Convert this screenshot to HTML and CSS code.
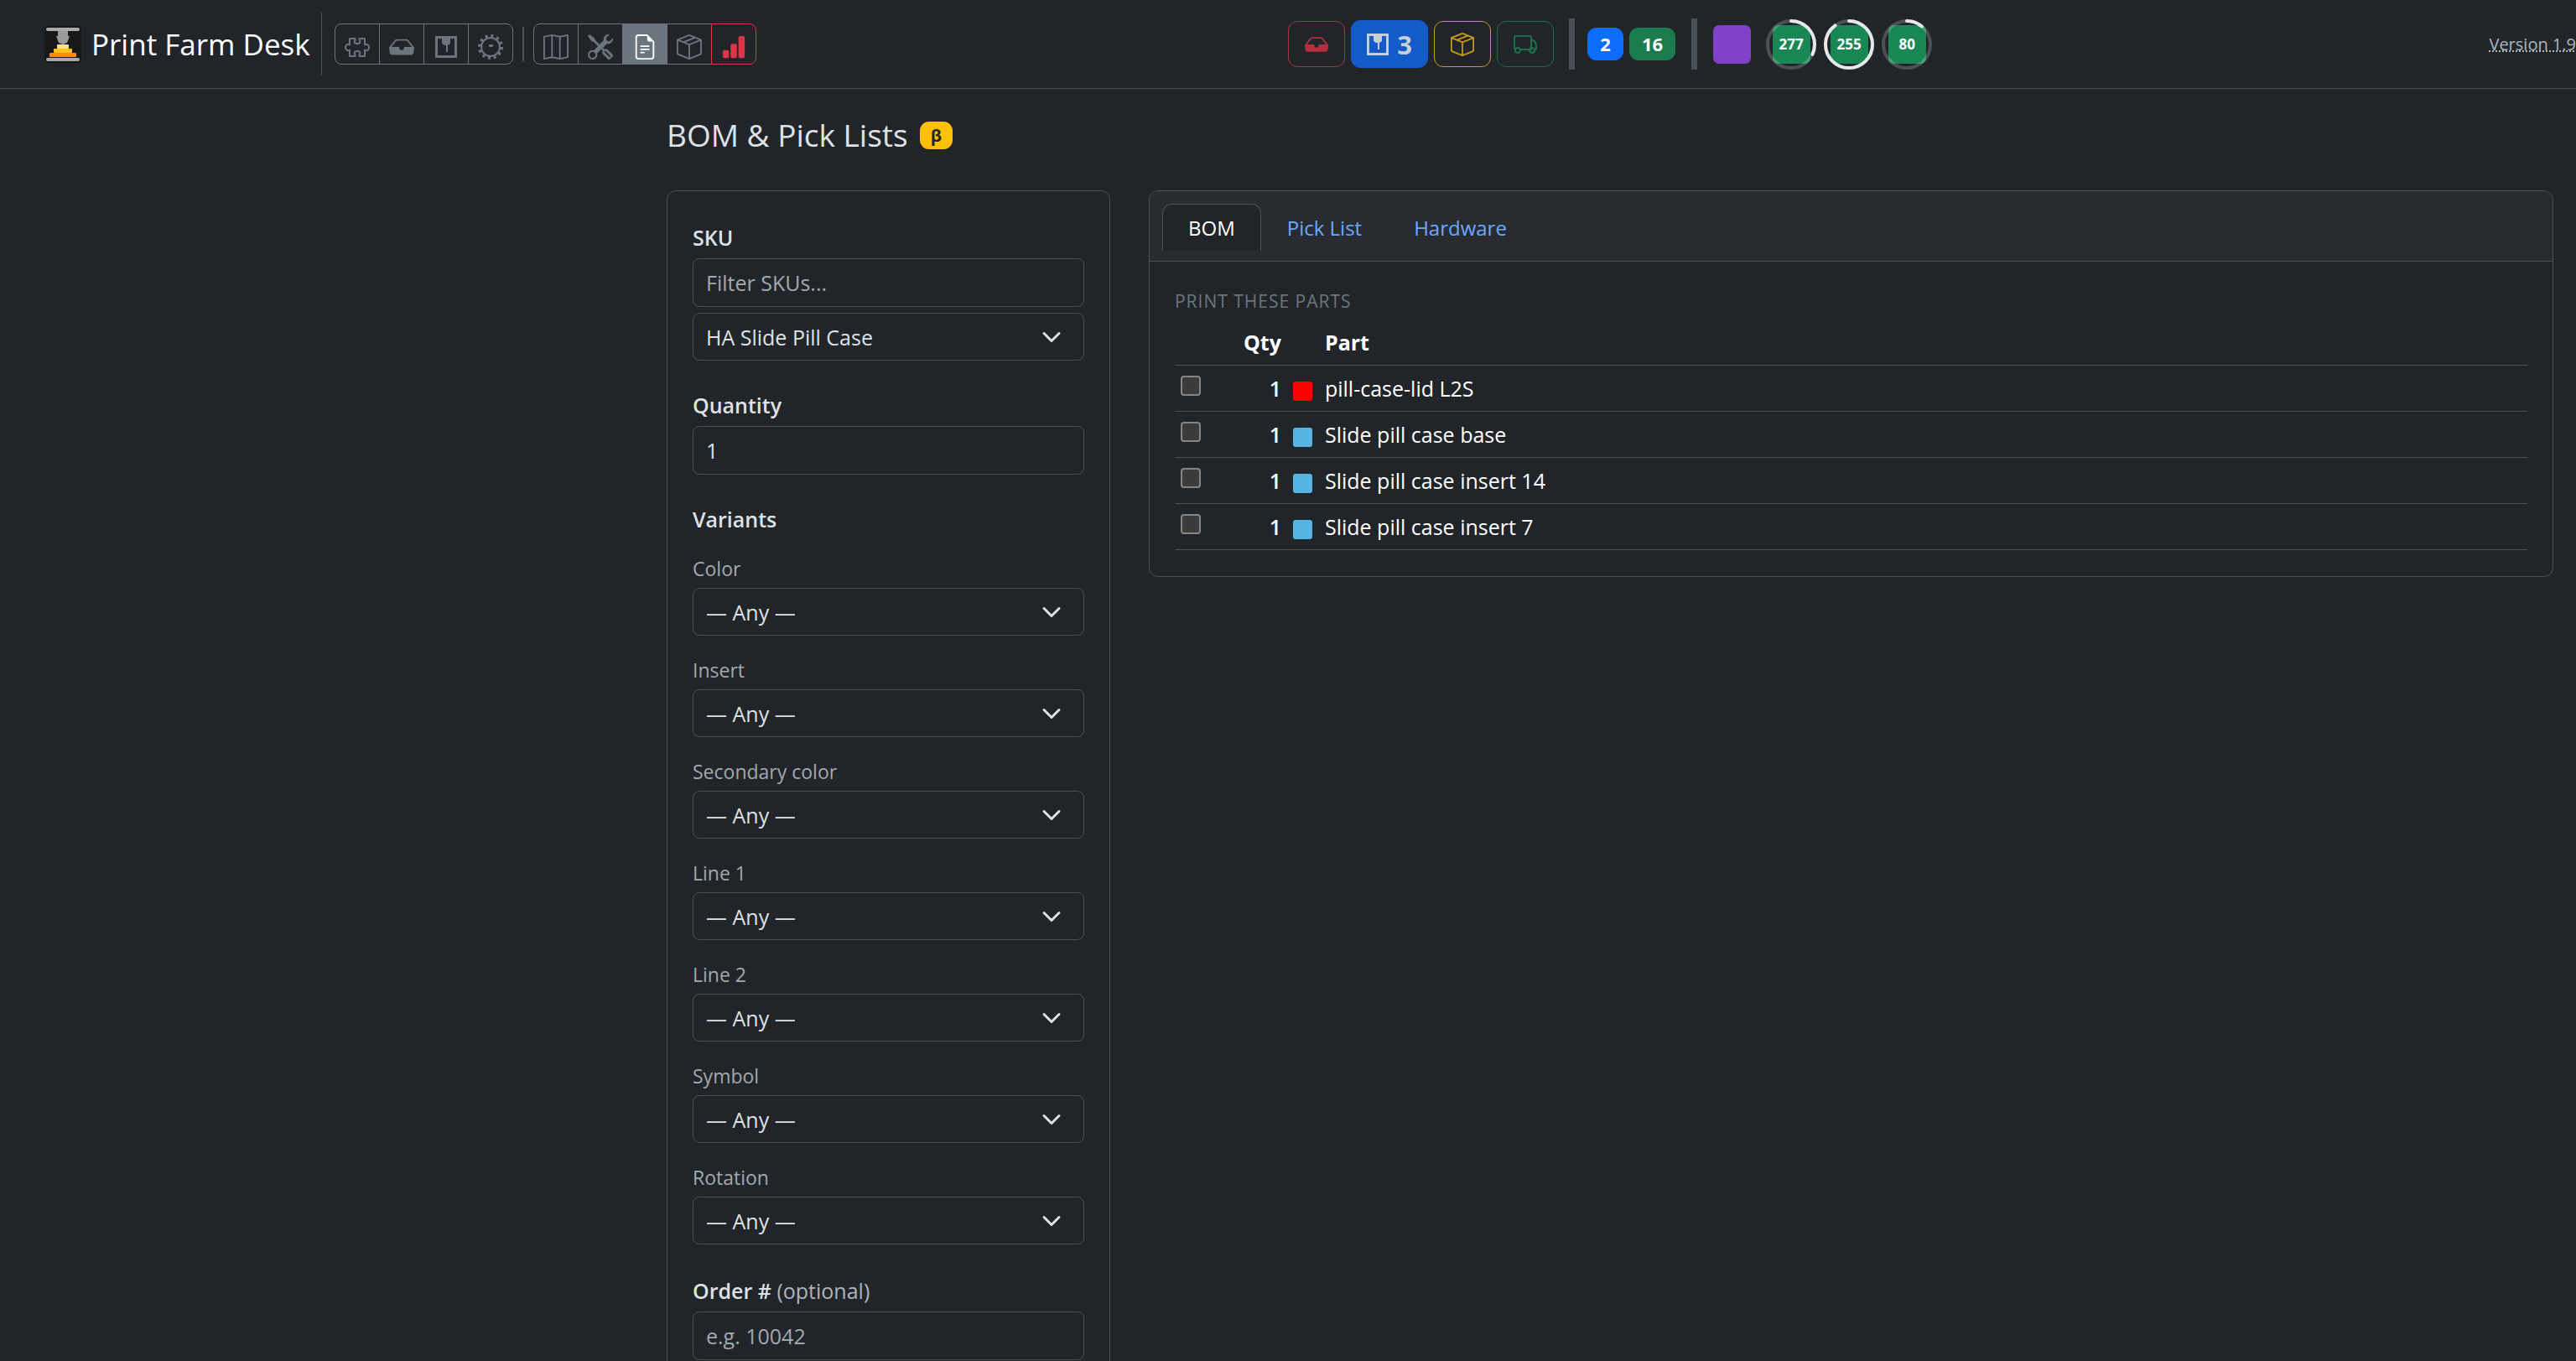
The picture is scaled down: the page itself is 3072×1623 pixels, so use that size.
FILE: index.html
```
<!DOCTYPE html>
<html lang="en">
<head>
    <meta charset="UTF-8">
    <meta name="viewport" content="width=device-width, initial-scale=1.0">
    <title>Print Farm Desk - BOM &amp; Pick Lists</title>
    <link rel="stylesheet" href="styles.css">
</head>
<body>
    <!-- Shared icons -->
    <svg class="icon-defs" aria-hidden="true">
        <symbol id="icon-puzzle" viewBox="0 0 30 30">
            <path d="M6 5H12.500V7C11 8 11 11 15 11S19 8 17.500 7V5H24V12.500C26 11 29 12 29 15.500S26 20 24 18.500V26H17.500V24C19 23 19 20 15 20S11 23 12.500 24V26H6V18.500C4 20 1 19 1 15.500S4 11 6 12.500Z" fill="none" stroke="currentColor" stroke-width="2" stroke-linejoin="round"/>
        </symbol>
        <symbol id="icon-inbox" viewBox="0 0 16 16">
            <path d="M4.980 4a.5.5 0 0 0-.39.188L1.540 8H6a.5.5 0 0 1 .5.5 1.500 1.500 0 1 0 3 0A.5.5 0 0 1 10 8h4.460l-3.050-3.812A.5.5 0 0 0 11.020 4zm-1.170-.437A1.500 1.500 0 0 1 4.980 3h6.040a1.500 1.500 0 0 1 1.170.563l3.700 4.625a.5.5 0 0 1 .106.374l-.39 3.124A1.500 1.500 0 0 1 14.117 13H1.883a1.500 1.500 0 0 1-1.489-1.314l-.39-3.124a.5.5 0 0 1 .106-.374z"/>
        </symbol>
        <symbol id="icon-printer" viewBox="0 0 26 26">
            <path d="M0 0H26V26H0ZM3 3V23H23V3H18V9L15 11V19H13V11H11L8 9V3Z" fill-rule="evenodd"/>
        </symbol>
        <symbol id="icon-gear" viewBox="0 0 30 30">
            <circle cx="15" cy="15" r="11" fill="none" stroke="currentColor" stroke-width="2"/>
            <circle cx="15" cy="15" r="13" fill="none" stroke="currentColor" stroke-width="4" stroke-dasharray="3 3.807"/>
            <rect x="13" y="12" width="5" height="3" rx="1"/>
        </symbol>
        <symbol id="icon-map" viewBox="0 0 16 16">
            <path d="M15.817.113A.5.5 0 0 1 16 .5v14a.5.5 0 0 1-.402.49l-5 1a.5.5 0 0 1-.196 0L5.500 15.010l-4.902.98A.5.5 0 0 1 0 15.500v-14a.5.5 0 0 1 .402-.49l5-1a.5.5 0 0 1 .196 0L10.500.99l4.902-.98a.5.5 0 0 1 .415.103M10 1.910l-4-.8v12.980l4 .8zm1 12.980 4-.8V1.110l-4 .8zm-6-.8V1.110l-4 .8v12.980z" fill-rule="evenodd"/>
        </symbol>
        <symbol id="icon-tools" viewBox="0 0 16 16">
            <path d="M1 0 0 1l2.200 3.081a1 1 0 0 0 .815.419h.07a1 1 0 0 1 .708.293l2.675 2.675-2.617 2.654A3.003 3.003 0 0 0 0 13a3 3 0 1 0 5.878-.851l2.654-2.617.968.968-.305.914a1 1 0 0 0 .242 1.023l3.270 3.270a.997.997 0 0 0 1.414 0l1.586-1.586a.997.997 0 0 0 0-1.414l-3.270-3.270a1 1 0 0 0-1.023-.242L10.500 9.500l-.96-.96 2.680-2.643A3.005 3.005 0 0 0 16 3q0-.405-.102-.777l-2.140 2.141L12 4l-.364-1.757L13.777.102a3 3 0 0 0-3.675 3.680L7.462 6.460 4.793 3.793a1 1 0 0 1-.293-.707v-.071a1 1 0 0 0-.419-.814zm9.646 10.646a.5.5 0 0 1 .708 0l2.914 2.915a.5.5 0 0 1-.707.707l-2.915-2.914a.5.5 0 0 1 0-.708M3 11l.471.242.529.026.287.445.445.287.026.529L5 13l-.242.471-.026.529-.445.287-.287.445-.529.026L3 15l-.471-.242L2 14.732l-.287-.445L1.268 14l-.026-.529L1 13l.242-.471.026-.529.445-.287.287-.445.529-.026z" fill-rule="evenodd"/>
        </symbol>
        <symbol id="icon-file" viewBox="0 0 16 16">
            <path d="M5.500 7a.5.5 0 0 0 0 1h5a.5.5 0 0 0 0-1zM5 9.500a.5.5 0 0 1 .5-.5h5a.5.5 0 0 1 0 1h-5a.5.5 0 0 1-.5-.5m0 2a.5.5 0 0 1 .5-.5h2a.5.5 0 0 1 0 1h-2a.5.5 0 0 1-.5-.5"/>
            <path d="M9.500 0H4a2 2 0 0 0-2 2v12a2 2 0 0 0 2 2h8a2 2 0 0 0 2-2V4.500zm0 1v2A1.500 1.500 0 0 0 11 4.500h2V14a1 1 0 0 1-1 1H4a1 1 0 0 1-1-1V2a1 1 0 0 1 1-1z"/>
        </symbol>
        <symbol id="icon-box" viewBox="0 0 16 16">
            <path d="M8.186 1.113a.5.5 0 0 0-.372 0L1.846 3.500l2.404.961L10.404 2zm3.564 1.426L5.596 5 8 5.961 14.154 3.500zm3.250 1.700-6.500 2.600v7.922l6.500-2.600V4.240zM7.500 14.762V6.838L1 4.239v7.923zM7.443.184a1.500 1.500 0 0 1 1.114 0l7.129 2.852A.5.5 0 0 1 16 3.500v8.662a1 1 0 0 1-.629.928l-7.185 2.874a.5.5 0 0 1-.372 0L.63 13.090a1 1 0 0 1-.63-.928V3.500a.5.5 0 0 1 .314-.464z" fill-rule="evenodd"/>
        </symbol>
        <symbol id="icon-chart" viewBox="0 0 16 16">
            <path d="M1 11a1 1 0 0 1 1-1h2a1 1 0 0 1 1 1v3a1 1 0 0 1-1 1H2a1 1 0 0 1-1-1zm5-4a1 1 0 0 1 1-1h2a1 1 0 0 1 1 1v7a1 1 0 0 1-1 1H7a1 1 0 0 1-1-1zm5-5a1 1 0 0 1 1-1h2a1 1 0 0 1 1 1v12a1 1 0 0 1-1 1h-2a1 1 0 0 1-1-1z"/>
        </symbol>
        <symbol id="icon-truck" viewBox="0 0 28 28">
            <g fill="none" stroke="currentColor" stroke-width="2">
                <path d="M3 20H2Q1 20 1 19V5Q1 4 2 4H19Q21 4 21 6V20H8M21 9H23Q27 11 27 16V19Q27 20 25 20M21 20H19"/>
                <circle cx="5" cy="21" r="3"/>
                <circle cx="22" cy="21" r="3"/>
            </g>
        </symbol>
    </svg>

    <header class="navbar">
        <div class="nav-left">
            <a class="brand" href="#">
                <svg class="logo" viewBox="0 0 44 44" aria-hidden="true">
                    <rect width="44" height="44" rx="3" fill="#181818"/>
                    <rect x="2" y="2" width="40" height="4" rx="2" fill="#aaa"/>
                    <rect x="2" y="38" width="40" height="4" rx="2" fill="#aaa"/>
                    <path d="M16 6H28V12H30L27 20L22 22L17 20L14 12H16Z" fill="#9a9a9a"/>
                    <rect x="15" y="22" width="14" height="5" rx="1" fill="#ffe082"/>
                    <rect x="11" y="27" width="22" height="5" rx="1" fill="#fbc11c"/>
                    <rect x="6" y="32" width="32" height="5" rx="1" fill="#fb8c00"/>
                </svg>
                <span>Print Farm Desk</span>
            </a>
            <nav class="nav-groups">
                <div class="btn-group">
                    <button type="button" class="btn" aria-label="Parts"><svg class="icon"><use href="#icon-puzzle"/></svg></button>
                    <button type="button" class="btn" aria-label="Inbox"><svg class="icon"><use href="#icon-inbox"/></svg></button>
                    <button type="button" class="btn" aria-label="Printers"><svg class="icon icon-sm"><use href="#icon-printer"/></svg></button>
                    <button type="button" class="btn" aria-label="Settings"><svg class="icon"><use href="#icon-gear"/></svg></button>
                </div>
                <span class="thin-rule"></span>
                <div class="btn-group">
                    <button type="button" class="btn" aria-label="Map"><svg class="icon"><use href="#icon-map"/></svg></button>
                    <button type="button" class="btn" aria-label="Maintenance"><svg class="icon"><use href="#icon-tools"/></svg></button>
                    <button type="button" class="btn active" aria-label="BOM"><svg class="icon"><use href="#icon-file"/></svg></button>
                    <button type="button" class="btn" aria-label="Inventory"><svg class="icon"><use href="#icon-box"/></svg></button>
                    <button type="button" class="btn danger" aria-label="Reports"><svg class="icon"><use href="#icon-chart"/></svg></button>
                </div>
            </nav>
        </div>
        <div class="status">
            <div class="status-buttons">
                <button type="button" class="stage stage-red" aria-label="Incoming"><svg class="icon icon-md"><use href="#icon-inbox"/></svg></button>
                <button type="button" class="stage stage-blue"><svg class="icon icon-sm"><use href="#icon-printer"/></svg>3</button>
                <button type="button" class="stage stage-yellow" aria-label="Packing"><svg class="icon icon-md"><use href="#icon-box"/></svg></button>
                <button type="button" class="stage stage-green" aria-label="Shipping"><svg class="icon icon-md"><use href="#icon-truck"/></svg></button>
            </div>
            <span class="thick-rule"></span>
            <div class="counts">
                <span class="count blue">2</span>
                <span class="count green">16</span>
            </div>
            <span class="thick-rule"></span>
            <div class="machines">
                <span class="machine purple"></span>
                <div class="ring">
                    <span class="machine done">277</span>
                    <svg viewBox="0 0 60 60"><circle class="track" cx="30" cy="30" r="28"/><circle class="progress" cx="30" cy="30" r="28" pathLength="100" stroke-dasharray="32 100"/></svg>
                </div>
                <div class="ring">
                    <span class="machine done">255</span>
                    <svg viewBox="0 0 60 60"><circle class="track" cx="30" cy="30" r="28"/><circle class="progress" cx="30" cy="30" r="28" pathLength="100" stroke-dasharray="90 100"/></svg>
                </div>
                <div class="ring">
                    <span class="machine done">80</span>
                    <svg viewBox="0 0 60 60"><circle class="track" cx="30" cy="30" r="28"/><circle class="progress" cx="30" cy="30" r="28" pathLength="100" stroke-dasharray="11 100"/></svg>
                </div>
            </div>
        </div>
        <a class="version" href="#">Version 1.9</a>
    </header>

    <main>
        <h1>BOM &amp; Pick Lists <span class="beta">β</span></h1>
        <div class="columns">
            <form class="card filters">
                <div class="field">
                    <label class="strong" for="sku">SKU</label>
                    <input type="text" id="sku-filter" placeholder="Filter SKUs..." aria-label="Filter SKUs">
                    <select id="sku"><option>HA Slide Pill Case</option></select>
                </div>
                <div class="field">
                    <label class="strong" for="quantity">Quantity</label>
                    <input type="text" inputmode="numeric" id="quantity" value="1">
                </div>
                <fieldset>
                    <legend class="strong">Variants</legend>
                    <div class="variant">
                        <label for="color">Color</label>
                        <select id="color"><option>— Any —</option></select>
                    </div>
                    <div class="variant">
                        <label for="insert">Insert</label>
                        <select id="insert"><option>— Any —</option></select>
                    </div>
                    <div class="variant">
                        <label for="secondary">Secondary color</label>
                        <select id="secondary"><option>— Any —</option></select>
                    </div>
                    <div class="variant">
                        <label for="line1">Line 1</label>
                        <select id="line1"><option>— Any —</option></select>
                    </div>
                    <div class="variant">
                        <label for="line2">Line 2</label>
                        <select id="line2"><option>— Any —</option></select>
                    </div>
                    <div class="variant">
                        <label for="symbol">Symbol</label>
                        <select id="symbol"><option>— Any —</option></select>
                    </div>
                    <div class="variant">
                        <label for="rotation">Rotation</label>
                        <select id="rotation"><option>— Any —</option></select>
                    </div>
                </fieldset>
                <div class="field">
                    <label class="strong" for="order">Order # <span class="optional">(optional)</span></label>
                    <input type="text" id="order" placeholder="e.g. 10042">
                </div>
            </form>

            <section class="card results">
                <div class="tabs">
                    <a class="tab active" href="#bom">BOM</a>
                    <a class="tab" href="#pick-list">Pick List</a>
                    <a class="tab" href="#hardware">Hardware</a>
                </div>
                <div class="card-body" id="bom">
                    <h2>Print these parts</h2>
                    <table>
                        <thead>
                            <tr><th class="check"></th><th class="qty">Qty</th><th class="color"></th><th>Part</th></tr>
                        </thead>
                        <tbody>
                            <tr>
                                <td class="check"><input type="checkbox" id="part1"></td>
                                <td class="qty">1</td>
                                <td class="color"><span class="swatch red"></span></td>
                                <td><label for="part1">pill-case-lid L2S</label></td>
                            </tr>
                            <tr>
                                <td class="check"><input type="checkbox" id="part2"></td>
                                <td class="qty">1</td>
                                <td class="color"><span class="swatch"></span></td>
                                <td><label for="part2">Slide pill case base</label></td>
                            </tr>
                            <tr>
                                <td class="check"><input type="checkbox" id="part3"></td>
                                <td class="qty">1</td>
                                <td class="color"><span class="swatch"></span></td>
                                <td><label for="part3">Slide pill case insert 14</label></td>
                            </tr>
                            <tr>
                                <td class="check"><input type="checkbox" id="part4"></td>
                                <td class="qty">1</td>
                                <td class="color"><span class="swatch"></span></td>
                                <td><label for="part4">Slide pill case insert 7</label></td>
                            </tr>
                        </tbody>
                    </table>
                </div>
            </section>
        </div>
    </main>
</body>
</html>
```
FILE: styles.css
```
* {
    box-sizing: border-box;
}
html {
    overflow: hidden;
}
body {
    margin: 0;
    background-color: #212529;
    color: #dee2e6;
    font-family: "Open Sans", "Noto Sans", sans-serif;
    font-size: 25px;
    line-height: 40px;
}
a {
    text-decoration: none;
}
button, input, select {
    font: inherit;
}
.icon-defs {
    display: none;
}
.icon {
    display: block;
    width: 30px;
    height: 30px;
    fill: currentColor;
}
.icon-md {
    width: 28px;
    height: 28px;
}
.icon-sm {
    width: 26px;
    height: 26px;
}

/* Top bar */
.navbar {
    display: grid;
    grid-template-columns: 50% 1fr auto;
    align-items: center;
    height: 106px;
    border-bottom: 1px solid #495057;
}
.nav-left {
    display: flex;
    align-items: center;
    padding-left: 53px;
}
.brand {
    display: flex;
    align-items: center;
    gap: 12px;
    height: 75px;
    padding-right: 13px;
    border-right: 1px solid #495057;
    color: #fff;
    font-size: 35px;
    white-space: nowrap;
}
.logo {
    width: 44px;
    height: 44px;
}
.nav-groups {
    display: flex;
    align-items: center;
    gap: 11px;
    padding-left: 15px;
}
.btn-group {
    display: flex;
}
.btn {
    display: flex;
    align-items: center;
    justify-content: center;
    width: 54px;
    height: 49px;
    margin-left: -1px;
    padding: 6px 0 0;
    background: none;
    border: 1px solid #6c757d;
    color: #6c757d;
    cursor: pointer;
}
.btn:first-child {
    margin-left: 0;
    border-radius: 8px 0 0 8px;
}
.btn:last-child {
    border-radius: 0 8px 8px 0;
}
.btn.active {
    background-color: #6c757d;
    color: #fff;
}
.btn.danger {
    border-color: #dc3545;
    color: #dc3545;
}
.thin-rule {
    width: 2px;
    height: 41px;
    background-color: #495057;
}

/* Farm status */
.status {
    display: flex;
    align-items: center;
    gap: 15px;
    font-weight: 700;
}
.status-buttons {
    display: flex;
    align-items: center;
    gap: 7px;
    margin-right: 3px;
}
.stage {
    display: flex;
    align-items: center;
    justify-content: center;
    gap: 10px;
    width: 68px;
    height: 55px;
    padding: 0;
    background: none;
    border: 1px solid;
    border-radius: 11px;
    cursor: pointer;
}
.stage-red {
    border-color: #a93442;
    color: #b52f3f;
}
.stage-blue {
    width: 92px;
    height: 57px;
    background-color: #125bc8;
    border-color: #125bc8;
    color: #c8ced6;
    font-size: 31px;
}
.stage-yellow {
    border-color: #c79a1a;
    color: #c79a1a;
}
.stage-green {
    border-color: #1d6d4b;
    color: #1d6d4b;
}
.thick-rule {
    width: 7px;
    height: 61px;
    background-color: #495057;
}
.counts {
    display: flex;
    gap: 7px;
    margin-right: 4px;
}
.count {
    min-width: 43px;
    padding: 0 15px;
    border-radius: 11px;
    color: #fff;
    font-size: 22px;
    line-height: 39px;
    text-align: center;
}
.count.blue {
    background-color: #0d6efd;
}
.count.green {
    background-color: #1a7c4e;
}
.machines {
    display: flex;
    align-items: center;
    gap: 9px;
    margin-left: 4px;
}
.machine {
    width: 45px;
    height: 46px;
    border-radius: 7px;
    color: #fff;
    font-size: 17px;
    line-height: 46px;
    text-align: center;
}
.machine.purple {
    margin-right: 9px;
    background-color: #8040c8;
}
.machine.done {
    background-color: #198754;
}
.ring {
    position: relative;
    display: flex;
    align-items: center;
    justify-content: center;
    width: 60px;
    height: 60px;
}
.ring svg {
    position: absolute;
    inset: 0;
    transform: rotate(-90deg);
}
.ring circle {
    fill: none;
    stroke-width: 4;
    stroke-linecap: round;
}
.ring .track {
    stroke: rgba(255, 255, 255, 0.2);
}
.ring .progress {
    stroke: #e6e8ea;
}
.version {
    color: #adb5bd;
    font-size: 20px;
    text-decoration: underline dotted;
    white-space: nowrap;
}

/* Page */
main {
    padding: 32px 27px 46px calc(25% + 27px);
}
h1 {
    display: flex;
    align-items: center;
    gap: 14px;
    margin: 0 0 43px;
    font-size: 37px;
    font-weight: 500;
    line-height: 46px;
}
.beta {
    padding: 0 13px;
    border-radius: 11px;
    background-color: #ffc107;
    color: #212529;
    font-size: 20px;
    font-weight: 700;
    line-height: 33px;
}
.columns {
    display: grid;
    grid-template-columns: 24fr 76fr;
    gap: 46px;
    align-items: start;
}
.card {
    border: 1px solid #495057;
    border-radius: 11px;
}
.filters {
    padding: 35px 30px 30px;
}
.field {
    display: flex;
    flex-direction: column;
    gap: 7px;
    margin-bottom: 33px;
}
label, legend {
    display: block;
}
.strong {
    padding: 0;
    margin-bottom: -2px;
    font-weight: 600;
}
.optional {
    color: #adb5bd;
    font-weight: 400;
}
.filters input, .filters select {
    width: 100%;
    height: 58px;
    padding: 0 15px;
    background-color: #212529;
    border: 1px solid #495057;
    border-radius: 8px;
    color: #dee2e6;
}
.filters input::placeholder {
    color: #a2a8ae;
    opacity: 1;
}
.filters select {
    height: 57px;
    appearance: none;
    background-image: url("data:image/svg+xml,%3Csvg xmlns='http://www.w3.org/2000/svg' viewBox='0 0 16 16'%3E%3Cpath fill='none' stroke='%23dee2e6' stroke-linecap='round' stroke-linejoin='round' stroke-width='2' d='m2 5 6 6 6-6'/%3E%3C/svg%3E");
    background-repeat: no-repeat;
    background-position: right 26px center;
    background-size: 24px;
}
fieldset {
    margin: 0 0 35px;
    padding: 0;
    border: 0;
}
.variant {
    margin-top: 23px;
}
.variant label {
    margin-bottom: 4px;
    color: #a2a8ae;
    font-size: 23px;
    line-height: 37px;
}

/* BOM table */
.tabs {
    display: flex;
    padding: 15px 15px 12px;
    background-color: #282c30;
    border-bottom: 1px solid #495057;
    border-radius: 10px 10px 0 0;
}
.tab {
    height: 56px;
    padding: 8px 30px;
    border: 1px solid transparent;
    border-bottom: 0;
    border-radius: 11px 11px 0 0;
    color: #6ea8fe;
    font-size: 24px;
}
.tab.active {
    background-color: #212529;
    border-color: #495057;
    color: #fff;
}
.card-body {
    padding: 31px 30px;
}
h2 {
    margin: 0 0 7px;
    color: #6c757d;
    font-size: 21px;
    font-weight: 400;
    letter-spacing: 1px;
    line-height: 32px;
    text-transform: uppercase;
}
table {
    width: 100%;
    border-collapse: collapse;
    color: #fff;
}
th, td {
    height: 55px;
    padding: 0 7px;
    border-bottom: 1px solid #495057;
    text-align: left;
}
th {
    height: 53px;
}
th.check, td.check {
    width: 54px;
}
th.qty, td.qty {
    width: 80px;
    text-align: right;
}
td.qty {
    font-weight: 600;
}
th.color, td.color {
    width: 38px;
}
.check input {
    appearance: none;
    display: block;
    width: 24px;
    height: 24px;
    margin: 0 0 6px;
    background-color: #3b3b3b;
    border: 2px solid #858585;
    border-radius: 4px;
}
.swatch {
    display: block;
    width: 23px;
    height: 23px;
    margin-top: 7px;
    border-radius: 3px;
    background-color: #56b4e4;
}
.swatch.red {
    background-color: #f00;
}
```
